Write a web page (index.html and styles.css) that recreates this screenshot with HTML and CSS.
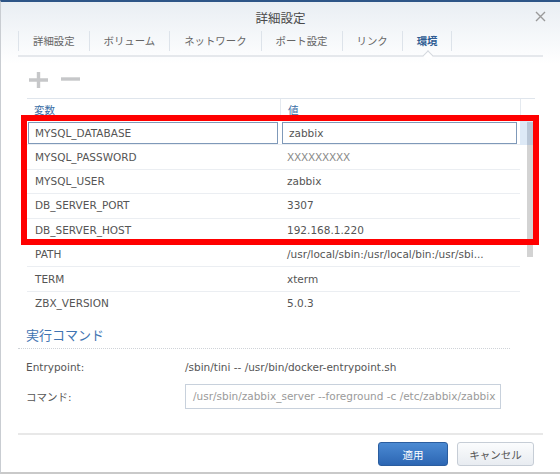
FILE: index.html
```html
<!DOCTYPE html>
<html lang="ja">
<head>
<meta charset="utf-8">
<title>詳細設定</title>
<link rel="stylesheet" href="styles.css">
</head>
<body>
<div class="dialog">
  <div class="titlebar">
    <span></span>
    <span class="title">詳細設定</span>
    <svg class="close" width="11" height="11" viewBox="0 0 11 11"><path d="M1 1L10 10M10 1L1 10" stroke="#9a9a9a" stroke-width="1.4" fill="none"/></svg>
  </div>
  <div class="content">
    <div class="tabbar">
      <span class="tab">詳細設定</span>
      <span class="tab">ボリューム</span>
      <span class="tab">ネットワーク</span>
      <span class="tab">ポート設定</span>
      <span class="tab">リンク</span>
      <span class="tab active">環境</span>
    </div>
    <div class="toolbar">
      <svg width="19" height="16" viewBox="0 0 19 16"><path d="M0 8H19M9.5 0V16" stroke="#c6c7c9" stroke-width="3.4" fill="none"/></svg>
      <svg width="19" height="16" viewBox="0 0 19 16"><path d="M0 7H19" stroke="#c6c7c9" stroke-width="3.4" fill="none"/></svg>
    </div>
    <div class="table">
      <div class="thead">
        <div class="th c1">変数</div>
        <div class="th c2">値</div>
        <div class="th c3"></div>
      </div>
      <div class="tbody">
        <div class="rows">
          <div class="row sel">
            <div class="td c1"><span class="cell-input">MYSQL_DATABASE</span></div>
            <div class="td c2"><span class="cell-input">zabbix</span></div>
          </div>
          <div class="row"><div class="td c1">MYSQL_PASSWORD</div><div class="td c2 light">XXXXXXXXX</div></div>
          <div class="row"><div class="td c1">MYSQL_USER</div><div class="td c2">zabbix</div></div>
          <div class="row"><div class="td c1">DB_SERVER_PORT</div><div class="td c2">3307</div></div>
          <div class="row"><div class="td c1">DB_SERVER_HOST</div><div class="td c2">192.168.1.220</div></div>
          <div class="row"><div class="td c1">PATH</div><div class="td c2">/usr/local/sbin:/usr/local/bin:/usr/sbi...</div></div>
          <div class="row"><div class="td c1">TERM</div><div class="td c2">xterm</div></div>
          <div class="row last"><div class="td c1">ZBX_VERSION</div><div class="td c2">5.0.3</div></div>
        </div>
        <div class="vscroll"><div class="thumb"></div></div>
      </div>
    </div>
    <div class="section">実行コマンド</div>
    <div class="form-row">
      <span class="label">Entrypoint:</span>
      <span class="value">/sbin/tini -- /usr/bin/docker-entrypoint.sh</span>
    </div>
    <div class="form-row">
      <span class="label">コマンド:</span>
      <span class="field">/usr/sbin/zabbix_server --foreground -c /etc/zabbix/zabbix</span>
    </div>
    <div class="footer">
      <button class="btn primary">適用</button>
      <button class="btn">キャンセル</button>
    </div>
  </div>
  <div class="highlight"></div>
</div>
</body>
</html>
```
FILE: styles.css
```css
* { box-sizing: border-box; }
html, body { margin: 0; padding: 0; }
body {
  width: 560px;
  height: 474px;
  overflow: hidden;
  background: #fff;
  font-family: "DejaVu Sans", "Noto Sans CJK JP", sans-serif;
  font-size: 10.5px;
  color: #555;
}
.dialog {
  position: relative;
  width: 560px;
  height: 474px;
  border-top: 2px solid #2d5587;
  border-left: 1px solid #c9cdd2;
  border-bottom: 2px solid #c9c9c9;
  background: linear-gradient(#e9eef3 0, #f7f9fb 40px, #fff 62px);
}
.titlebar {
  height: 28px;
  display: grid;
  grid-template-columns: 1fr auto 1fr;
  align-items: center;
}
.title {
  font-family: "Noto Sans CJK JP", sans-serif;
  font-size: 12.5px;
  color: #4a4a4a;
  padding-top: 2px;
}
.close { justify-self: end; margin-right: 14px; margin-top: 1px; }
.content { padding: 0 17px 0 17px; }
.tabbar {
  display: flex;
  padding-top: 1px;
  padding-bottom: 4px;
  border-bottom: 2px solid #e5e8ec;
}
.tab {
  position: relative;
  height: 20px;
  line-height: 20px;
  padding: 0 14px;
  border-left: 1px solid #dde3ea;
  font-family: "Noto Sans CJK JP", sans-serif;
  font-size: 10.4px;
  color: #666;
}
.tab:last-child { border-right: 1px solid #dde3ea; }
.tab.active { color: #2f5d93; font-weight: bold; }
.tab.active::after {
  content: "";
  position: absolute;
  left: 50%;
  bottom: -9px;
  width: 7px;
  height: 7px;
  margin-left: -3px;
  background: #fff;
  border-left: 1px solid #d3d8de;
  border-top: 1px solid #d3d8de;
  transform: rotate(45deg);
}
.toolbar {
  display: flex;
  gap: 13px;
  margin: 15px 0 0 11px;
  height: 16px;
}
.table { margin: 10px 8px 0 9px; }
.thead {
  display: flex;
  height: 23px;
  border-top: 1px solid #dfe5ec;
}
.th {
  font-family: "Noto Sans CJK JP", sans-serif;
  color: #3a6ea6;
  line-height: 22px;
}
.c1 { width: 253px; padding-left: 7px; flex: none; }
.c2 { width: 240px; padding-left: 7px; flex: none; }
.c3 { flex: 1; }
.th.c2, .th.c3 { border-left: 1px solid #e4e9ef; }
.tbody { display: flex; }
.rows { width: 493px; }
.row {
  display: flex;
  height: 24.4px;
  border-bottom: 1px solid #ebeef2;
  align-items: center;
}
.row.last { border-bottom: none; }
.td { white-space: nowrap; overflow: hidden; line-height: 17px; }
.td.c1 { padding-left: 8px; }
.td.c2 { padding-left: 7px; }
.light { color: #8a8a8a; letter-spacing: -0.2px; }
.row.sel { background: #fff; }
.row.sel .td { height: 100%; padding: 0; }
.row.sel .td.c1 { padding: 1px 2px 0 1px; }
.row.sel .td.c2 { padding: 1px 3px 0 2px; }
.cell-input {
  display: flex;
  align-items: center;
  height: 100%;
  border: 1px solid #7f99b9;
  background: #fff;
  padding-left: 6px;
}
.vscroll {
  flex: 1;
  background: linear-gradient(#dde9f6 0, #dde9f6 24px, transparent 24px);
  padding-left: 7px;
  padding-top: 1px;
}
.thumb {
  width: 6px;
  height: 135px;
  background: linear-gradient(#b9c6d6 0, #b9c6d6 23px, #d3d3d3 23px);
}
.section {
  margin-top: 10px;
  padding: 0 0 4px 8px;
  margin-right: 33px;
  line-height: 18px;
  font-family: "Noto Sans CJK JP", sans-serif;
  font-size: 13px;
  color: #3f74b2;
  border-bottom: 1px dotted #cfd3d8;
}
.form-row {
  display: flex;
  align-items: center;
  margin-left: 8px;
  margin-top: 6px;
  min-height: 24px;
}
.form-row + .form-row { margin-top: 5px; }
.label { width: 159px; flex: none; }
.label, .value { font-family: "DejaVu Sans", "Noto Sans CJK JP", sans-serif; }
.field {
  width: 316px;
  height: 25px;
  line-height: 23px;
  border: 1px solid #c8d1dc;
  padding-left: 7px;
  color: #9a9a9a;
  white-space: nowrap;
  overflow: hidden;
}
.footer {
  display: flex;
  justify-content: flex-end;
  gap: 9px;
  margin-top: 24px;
  padding: 7px 9px 0 0;
  border-top: 2px solid #e8e8e8;
}
.btn {
  height: 24px;
  margin: 0;
  border-radius: 3px;
  font-family: "Noto Sans CJK JP", sans-serif;
  font-size: 10.5px;
  padding: 0;
  border: 1px solid #c6cdd6;
  background: linear-gradient(#fbfcfd, #e8ecf1);
  color: #555;
  width: 77px;
}
.btn.primary {
  width: 70px;
  border-color: #2a5d9f;
  background: linear-gradient(#4b8ad3, #2c66b3);
  color: #fff;
}
.highlight {
  position: absolute;
  left: 20px;
  top: 113px;
  width: 518px;
  height: 130px;
  border: 6px solid #ff0000;
  pointer-events: none;
}
```
